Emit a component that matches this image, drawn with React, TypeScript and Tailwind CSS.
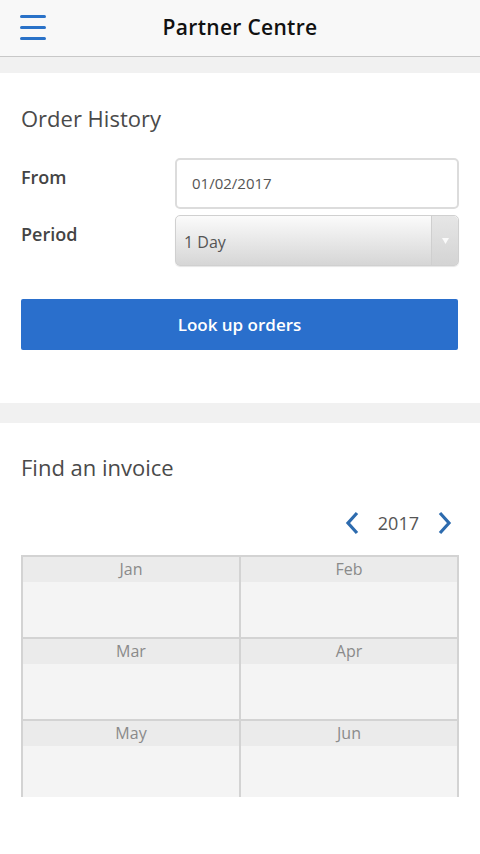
import React from 'react'

const months = ['Jan', 'Feb', 'Mar', 'Apr', 'May', 'Jun']

const App = () => {
  return (
    <div className="w-[480px] h-[854px] bg-white overflow-hidden font-['Open_Sans',sans-serif] text-[#444]">
      {/* header */}
      <div className="h-[57px] bg-[#f8f8f8] border-b border-[#c8c8c8] flex items-center relative">
        <div className="absolute left-[20px] top-[15px] w-[26px] flex flex-col gap-[8px]">
          <div className="h-[3px] bg-[#2a72c8] rounded-sm" />
          <div className="h-[3px] bg-[#2a72c8] rounded-sm" />
          <div className="h-[3px] bg-[#2a72c8] rounded-sm" />
        </div>
        <h1 className="w-full text-center text-[21px] font-semibold text-[#111] tracking-[0.3px]">Partner Centre</h1>
      </div>
      <div className="h-[16px] bg-[#f1f1f1]" />

      {/* order history */}
      <div className="px-[21px] pt-[30px] h-[330px]">
        <h2 className="text-[22px] leading-[30px] text-[#4a4a4a]">Order History</h2>
        <div className="mt-[25px] flex items-start">
          <span className="w-[154px] pt-[6px] text-[18px] font-semibold text-[#444]">From</span>
          <div className="flex-1 h-[51px] border-2 border-[#dcdcdc] rounded-[5px] flex items-center pl-[15px] text-[15px] text-[#555]">
            01/02/2017
          </div>
        </div>
        <div className="mt-[6px] flex items-start">
          <span className="w-[154px] pt-[6px] text-[18px] font-semibold text-[#444]">Period</span>
          <div className="flex-1 h-[51px] rounded-[5px] border border-[#d0d0d0] bg-gradient-to-b from-[#fbfbfb] to-[#d6d6d6] flex items-stretch shadow-[0_1px_1px_rgba(0,0,0,0.1)]">
            <span className="flex-1 flex items-center pl-[8px] pt-[3px] text-[16px] text-[#555]">1 Day</span>
            <span className="w-[27px] border-l border-[#cfcfcf] bg-gradient-to-b from-[#e6e6e6] to-[#d4d4d4] flex items-center justify-center rounded-r-[5px]">
              <svg width="7" height="6" viewBox="0 0 7 6"><path d="M0 0h7L3.5 6z" fill="#fafafa" /></svg>
            </span>
          </div>
        </div>
        <button className="mt-[33px] w-[437px] h-[51px] bg-[#2a6fcc] rounded-[2px] text-white text-[17px] font-semibold">
          Look up orders
        </button>
      </div>
      <div className="h-[20px] bg-[#f1f1f1]" />

      {/* find an invoice */}
      <div className="px-[21px] pt-[29px]">
        <h2 className="text-[22px] leading-[30px] text-[#4a4a4a]">Find an invoice</h2>
        <div className="mt-[25px] flex items-center justify-end gap-[16px] pr-[6px] h-[32px]">
          <svg width="16" height="24" viewBox="0 0 16 24"><path d="M13 2L4 12l9 10" stroke="#2d6bae" strokeWidth="3.2" fill="none" /></svg>
          <span className="text-[18px] text-[#555] px-[2px]">2017</span>
          <svg width="16" height="24" viewBox="0 0 16 24"><path d="M3 2l9 10-9 10" stroke="#2d6bae" strokeWidth="3.2" fill="none" /></svg>
        </div>
        <div className="mt-[16px] w-[438px] h-[242px] overflow-hidden">
          <div className="grid grid-cols-2 border-l-2 border-t-2 border-[#d3d3d3]">
            {months.map((m) => (
              <div key={m} className="h-[82px] border-r-2 border-b-2 border-[#d3d3d3] bg-[#f4f4f4] flex flex-col">
                <div className="h-[25px] bg-[#ebebeb] text-center text-[16px] leading-[25px] text-[#8a8a8a]">{m}</div>
              </div>
            ))}
          </div>
        </div>
      </div>
    </div>
  )
}

export default App
